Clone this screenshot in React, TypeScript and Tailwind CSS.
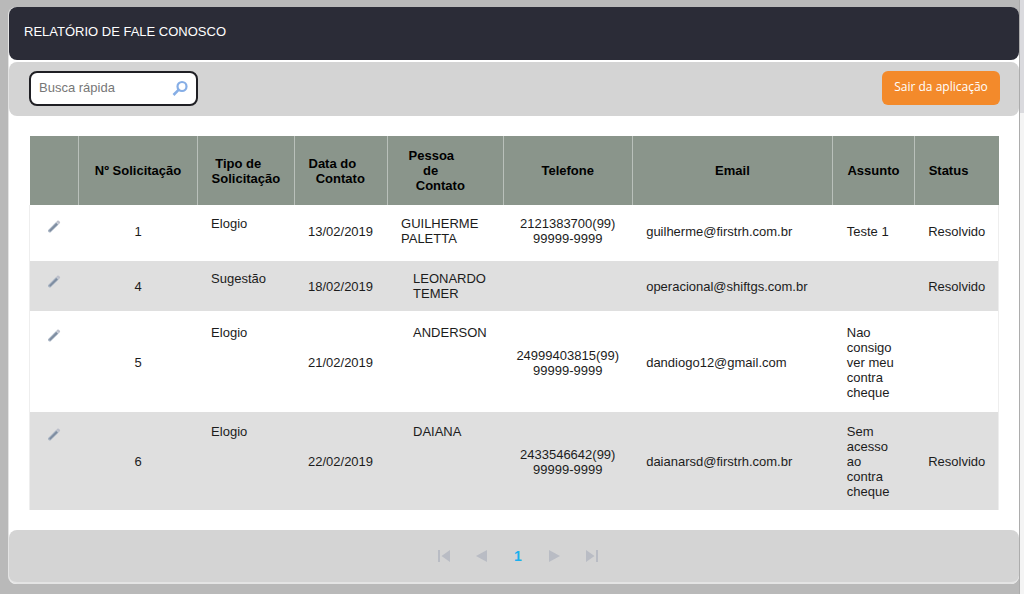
type Request = {
	id: number;
	type: string;
	date: string;
	contact: string;
	contactClass: string;
	phone?: string;
	email: string;
	subject?: string;
	status?: string;
	rowClass: string;
};

const requests: Request[] = [
	{
		id: 1,
		type: "Elogio",
		date: "13/02/2019",
		contact: "GUILHERME PALETTA",
		contactClass: "pl-[14px]",
		phone: "2121383700(99) 99999-9999",
		email: "guilherme@firstrh.com.br",
		subject: "Teste 1",
		status: "Resolvido",
		rowClass: "*:pt-[11px] *:pb-[15px]",
	},
	{
		id: 4,
		type: "Sugestão",
		date: "18/02/2019",
		contact: "LEONARDO TEMER",
		contactClass: "pl-[26px]",
		email: "operacional@shiftgs.com.br",
		status: "Resolvido",
		rowClass: "*:pt-[10px] *:pb-[10px] bg-[#dfdfdf]",
	},
	{
		id: 5,
		type: "Elogio",
		date: "21/02/2019",
		contact: "ANDERSON",
		contactClass: "pl-[26px]",
		phone: "24999403815(99) 99999-9999",
		email: "dandiogo12@gmail.com",
		subject: "Nao consigo ver meu contra cheque",
		rowClass: "*:pt-[14px] *:pb-[12px]",
	},
	{
		id: 6,
		type: "Elogio",
		date: "22/02/2019",
		contact: "DAIANA",
		contactClass: "pl-[26px]",
		phone: "2433546642(99) 99999-9999",
		email: "daianarsd@firstrh.com.br",
		subject: "Sem acesso ao contra cheque",
		status: "Resolvido",
		rowClass: "*:pt-[12px] *:pb-[11px] bg-[#dfdfdf]",
	},
];

const PencilIcon = () => (
	<svg className="w-[14px] h-[14px]" viewBox="0 0 14 14" aria-hidden="true">
		<path d="M1 11.200L9.200 3l2.400 2.400L3.400 13.400Q1 14 1 11.200z" fill="#a3afbf" />
		<path d="M2.200 11.400l7.200-7.200 1.200 1.200-7.200 7.200z" fill="#7c8b9f" />
		<path d="M9.400 2.800l1.200-1.200c.8-.8 3.200 1.600 2.400 2.400l-1.200 1.200z" fill="#bcbfca" />
	</svg>
);

const SearchIcon = () => (
	<svg className="w-4 h-4" viewBox="0 0 16 16" fill="none" aria-hidden="true">
		<circle cx="10" cy="6.500" r="4.500" stroke="#86aee6" strokeWidth="2.200" />
		<path d="M6.800 9.700L1.500 15" stroke="#86aee6" strokeWidth="2.600" />
	</svg>
);

const Toolbar = () => (
	<div className="flex items-center justify-between h-[54px] mt-[2px] pl-5 pr-[19px] pb-[2px] rounded-lg bg-[#d4d4d4]">
		<form className="flex items-center w-[169px] h-[35px] px-2 rounded-lg border-2 border-[#1f1f24] bg-white">
			<input
				type="text"
				aria-label="Busca rápida"
				placeholder="Busca rápida"
				className="flex-1 min-w-0 text-[13px] outline-none placeholder:text-[#777777]"
			/>
			<button type="button" aria-label="Buscar">
				<SearchIcon />
			</button>
		</form>
		<button
			type="button"
			className="h-[34px] w-[118px] pb-[2px] rounded-md bg-[#f38a2b] text-white text-xs font-medium font-['Open_Sans',sans-serif] whitespace-nowrap">
			Sair da aplicação
		</button>
	</div>
);

const RequestsTable = () => (
	<table className="w-full table-fixed text-[13px] leading-[15px] text-[#1c1c1c]">
		<colgroup>
			<col className="w-[5.1%]" />
			<col className="w-[12.2%]" />
			<col className="w-[10%]" />
			<col className="w-[9.6%]" />
			<col className="w-[12%]" />
			<col className="w-[13.3%]" />
			<col className="w-[20.7%]" />
			<col className="w-[8.4%]" />
			<col className="w-[8.7%]" />
		</colgroup>
		<thead>
			<tr className="h-[69px] bg-[#8a958b] text-black *:border-r *:border-[#b9c0ba] *:last:border-r-0">
				<td></td>
				<th>Nº Solicitação</th>
				<th className="pl-[14px] text-left whitespace-pre">{" Tipo de\nSolicitação"}</th>
				<th className="pl-[14px] text-left whitespace-pre">{"Data do\n  Contato"}</th>
				<th className="pl-[21px] text-left whitespace-pre">{"Pessoa\n    de\n  Contato"}</th>
				<th>Telefone</th>
				<th>Email</th>
				<th>Assunto</th>
				<th className="pl-[14px] text-left">Status</th>
			</tr>
		</thead>
		<tbody className="border-x border-[#eeeeee]">
			{requests.map((request) => (
				<tr key={request.id} className={request.rowClass}>
					<td className="pl-[17px] align-top">
						<button type="button" aria-label={`Editar solicitação ${request.id}`} className="block pt-[3px]">
							<PencilIcon />
						</button>
					</td>
					<td className="text-center">{request.id}</td>
					<td className="pl-[14px] align-top">{request.type}</td>
					<td className="pl-[14px]">{request.date}</td>
					<td className={`${request.contactClass} pr-4 align-top`}>{request.contact}</td>
					<td className="px-2 text-center">{request.phone}</td>
					<td className="pl-[14px]">{request.email}</td>
					<td className="pl-[14px] pr-4">{request.subject}</td>
					<td className="pl-[14px]">{request.status}</td>
				</tr>
			))}
		</tbody>
	</table>
);

const Pagination = () => (
	<nav
		aria-label="Paginação"
		className="flex items-center justify-center h-[54px] mt-5 pl-2 rounded-lg border-b-2 border-[#e4e4e4] bg-[#d4d4d4] text-[#b9bcc4]">
		<div className="flex items-center gap-[23px]">
			<button type="button" aria-label="Primeira página">
				<svg className="w-[14px] h-3" viewBox="0 0 14 12" fill="currentColor">
					<path d="M1 0h2v12H1zM13 0v12L4.500 6z" />
				</svg>
			</button>
			<button type="button" aria-label="Página anterior">
				<svg className="w-[14px] h-3" viewBox="0 0 14 12" fill="currentColor">
					<path d="M13 0v12L2 6z" />
				</svg>
			</button>
			<button type="button" aria-current="page" className="w-[14px] text-sm font-bold text-[#1ab0ee]">
				1
			</button>
			<button type="button" aria-label="Próxima página">
				<svg className="w-[14px] h-3" viewBox="0 0 14 12" fill="currentColor">
					<path d="M1 0v12L12 6z" />
				</svg>
			</button>
			<button type="button" aria-label="Última página">
				<svg className="w-[14px] h-3" viewBox="0 0 14 12" fill="currentColor">
					<path d="M1 0v12L9.500 6zM11 0h2v12h-2z" />
				</svg>
			</button>
		</div>
	</nav>
);

const App = () => {
	return (
		<div className="flex min-h-screen bg-[#b9b9b9] font-['Liberation_Sans',Arial,sans-serif]">
			<div className="flex-1 min-w-0 pt-[7px] pl-2 pb-2">
				<main className="rounded-lg border-l border-[#e4e4e4] bg-white">
					<header className="flex items-center h-[53px] pl-[15px] pb-[3px] rounded-lg bg-[#2b2c37]">
						<h1 className="text-[13px] text-white">RELATÓRIO DE FALE CONOSCO</h1>
					</header>
					<Toolbar />
					<div className="px-5 pt-5">
						<RequestsTable />
					</div>
					<Pagination />
				</main>
			</div>
			<div className="flex flex-col w-[5px] border-l border-[#acacac] bg-[#f4f4f4]">
				<div className="h-[113px] bg-[#dadade]"></div>
			</div>
		</div>
	);
};

export default App;
